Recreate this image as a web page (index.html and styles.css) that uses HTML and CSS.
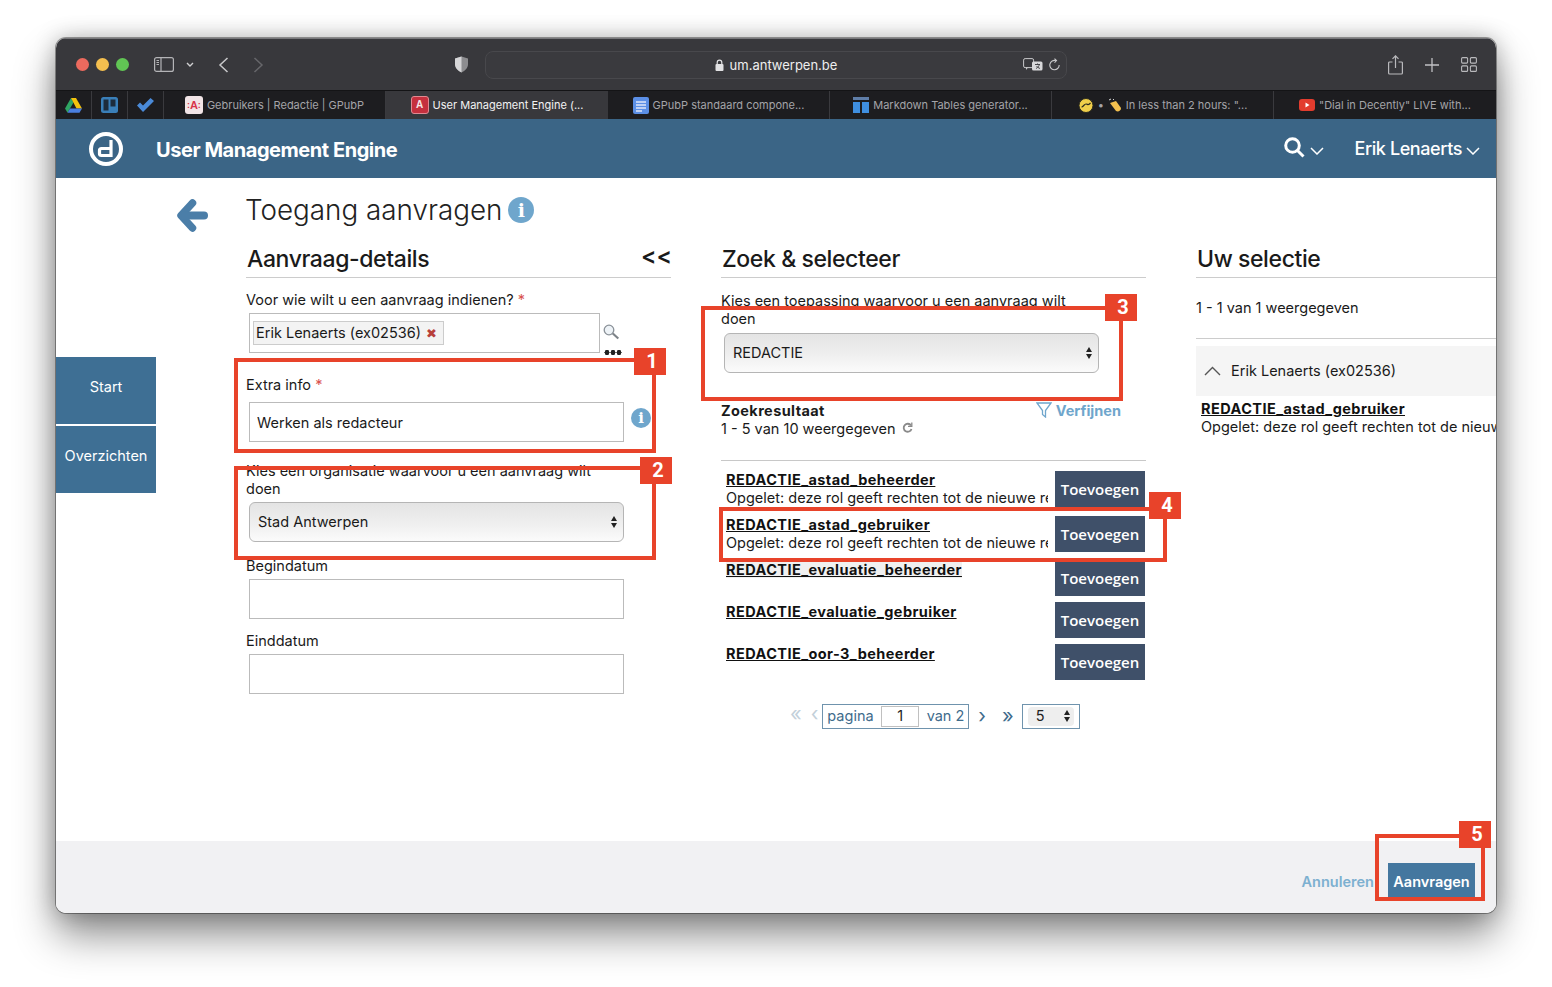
FILE: index.html
```html
<!DOCTYPE html>
<html lang="en">
<head>
    <meta charset="UTF-8">
    <meta name="viewport" content="width=device-width, initial-scale=1.0">
    <title>User Management Engine</title>
    <link rel="stylesheet" href="styles.css">
</head>
<body>
    <div class="window">
        <!-- browser chrome -->
        <div class="toolbar">
            <div class="lights">
                <span class="light red"></span>
                <span class="light yellow"></span>
                <span class="light green"></span>
            </div>
            <svg class="tb-sidebar" width="20" height="15" viewBox="0 0 20 15" fill="none" stroke="#b4b4b7" stroke-width="1.2"><rect x="0.6" y="0.6" width="18.8" height="13.8" rx="2"/><path d="M7 .6v13.8"/><path d="M2.5 3.5h2.5M2.5 5.5h2.5M2.5 7.5h2.5" stroke-width="1"/></svg>
            <svg class="tb-chevron" width="8" height="5" viewBox="0 0 8 5" fill="none" stroke="#d0d0d2" stroke-width="1.4"><path d="M1 1l3 3 3-3"/></svg>
            <svg class="tb-back" width="11" height="16" viewBox="0 0 11 16" fill="none" stroke="#c8c8ca" stroke-width="1.5"><path d="M9.5 1L2 8l7.5 7"/></svg>
            <svg class="tb-forward" width="11" height="16" viewBox="0 0 11 16" fill="none" stroke="#66666a" stroke-width="1.5"><path d="M1.5 1L9 8l-7.5 7"/></svg>
            <svg class="tb-shield" width="15" height="17" viewBox="0 0 15 17"><path d="M7.5 0.6L14 2.6V8c0 4-2.8 6.800-6.500 8.400C3.800 14.800 1 12 1 8V2.600z" fill="#8d8d90"/><path d="M7.500 .6L1 2.600V8c0 4 2.800 6.800 6.500 8.400z" fill="#d6d6d8"/></svg>
            <div class="address">
                <div class="address-center">
                    <svg width="9" height="12" viewBox="0 0 9 12"><rect x="0.500" y="5" width="8" height="7" rx="1" fill="#e2e2e4"/><path d="M2.200 5V3.400a2.300 2.300 0 0 1 4.600 0V5" fill="none" stroke="#e2e2e4" stroke-width="1.200"/></svg>
                    <span>um.antwerpen.be</span>
                </div>
                <svg class="tb-translate" width="20" height="14" viewBox="0 0 20 14"><rect x="0.600" y="0.600" width="10" height="9" rx="1.500" fill="none" stroke="#c8c8ca" stroke-width="1"/><path d="M3 12l2-2.500H3z" fill="#c8c8ca"/><rect x="9" y="3.500" width="10.500" height="9" rx="1.500" fill="#d8d8da"/><path d="M12 6.500h5M14.500 5.500v1M13 10.500c2-1 3-2.500 3.300-4M13.500 8c.8 1.200 2 2 3.500 2.500" fill="none" stroke="#38383c" stroke-width=".9"/></svg>
                <svg class="tb-reload" width="11" height="13" viewBox="0 0 11 13" fill="none" stroke="#c8c8ca" stroke-width="1.100"><path d="M7 2.600A4.700 4.700 0 1 0 10.200 7"/><path d="M5.500 .6l2 2-2 2"/></svg>
            </div>
            <svg class="tb-share" width="15" height="20" viewBox="0 0 15 20" fill="none" stroke="#b9b9bc" stroke-width="1.200"><path d="M4.500 7H1.600C1 7 .6 7.400 .6 8v10c0 .6.400 1 1 1h11.800c.6 0 1-.4 1-1V8c0-.6-.4-1-1-1h-2.900"/><path d="M7.500 13V1M4.500 3.800L7.500 .8l3 3"/></svg>
            <svg class="tb-plus" width="14" height="14" viewBox="0 0 14 14" fill="none" stroke="#c0c0c3" stroke-width="1.300"><path d="M7 0v14M0 7h14"/></svg>
            <svg class="tb-grid" width="16" height="15" viewBox="0 0 16 15" fill="none" stroke="#b9b9bc" stroke-width="1.100"><rect x="0.600" y="0.600" width="6" height="5.500" rx="1"/><rect x="9.400" y="0.600" width="6" height="5.500" rx="1"/><rect x="0.600" y="8.900" width="6" height="5.500" rx="1"/><rect x="9.400" y="8.900" width="6" height="5.500" rx="1"/></svg>
        </div>
        <div class="tabs">
            <div class="pinned">
                <svg width="17" height="15" viewBox="0 0 17 15"><path d="M6 0L0 10.500l2.500 4.200 6-10.200z" fill="#2fa563"/><path d="M11 0H6l5.500 10.500H17z" fill="#f4c20d"/><path d="M2.500 14.700h12l2.500-4.200H5z" fill="#4a7fe0"/></svg>
            </div>
            <div class="pinned">
                <svg width="17" height="16" viewBox="0 0 17 16"><rect width="17" height="16" rx="2.500" fill="#3a7fb8"/><rect x="2.500" y="2.500" width="5" height="11" fill="#1c2c3c"/><rect x="9.500" y="2.500" width="5" height="7" fill="#1c2c3c"/></svg>
            </div>
            <div class="pinned">
                <svg width="17" height="14" viewBox="0 0 17 14"><path d="M0 7.500L3 4.500l3 3L13.500 0 17 3 6 14z" fill="#4a8ad8"/></svg>
            </div>
            <div class="tab">
                <span class="fav fav-pink">A</span>
                <span>Gebruikers | Redactie | GPubP</span>
            </div>
            <div class="tab active">
                <span class="fav fav-red">A</span>
                <span>User Management Engine (...</span>
            </div>
            <div class="tab">
                <svg width="16" height="17" viewBox="0 0 16 17"><rect width="16" height="17" rx="2" fill="#5b8fe6"/><path d="M3 5h10M3 8h10M3 11h10M3 14h6" stroke="#dfe8fa" stroke-width="1.300"/></svg>
                <span>GPubP standaard compone...</span>
            </div>
            <div class="tab">
                <svg width="16" height="16" viewBox="0 0 16 16"><rect width="16" height="3" fill="#5f7ea8"/><rect y="5" width="7" height="11" fill="#3f8fe0"/><rect x="9" y="5" width="7" height="11" fill="#3f8fe0"/></svg>
                <span>Markdown Tables generator...</span>
            </div>
            <div class="tab">
                <svg width="16" height="15" viewBox="0 0 16 15"><circle cx="8" cy="7.500" r="7" fill="#f0cf4a" stroke="#2b2b20" stroke-width="1"/><path d="M3.500 9c2 0 2.500-3 4.500-3s2 2 4.500-1" fill="none" stroke="#2b2b20" stroke-width="1.200"/></svg>
                <span class="tab-dot">•</span>
                <svg width="14" height="14" viewBox="0 0 14 14"><path d="M2 5l6 8c2 1 5 0 5-3L8 3z" fill="#f3c04e"/><path d="M1 2l2-1M5 1l1 1" stroke="#d8d8d8"/></svg>
                <span>In less than 2 hours: "...</span>
            </div>
            <div class="tab">
                <svg width="16" height="12" viewBox="0 0 16 12"><rect width="16" height="12" rx="3" fill="#e23c2e"/><path d="M6.500 3.500v5l4-2.500z" fill="#fff"/></svg>
                <span>"Dial in Decently" LIVE with...</span>
            </div>
        </div>

        <!-- application -->
        <header class="appbar">
            <svg class="logo" width="36" height="36" viewBox="0 0 36 36" fill="none" stroke="#fff"><circle cx="18" cy="18" r="15" stroke-width="4"/><path d="M23 9v15.500H13.500q-2 0-2-2v-3q0-2 2-2H23" stroke-width="3.200"/></svg>
            <div class="app-title">User Management Engine</div>
            <svg class="search" width="21" height="21" viewBox="0 0 21 21" fill="none" stroke="#fff" stroke-width="3"><circle cx="8.500" cy="8.500" r="6.800"/><path d="M13.500 13.500l6 6"/></svg>
            <svg class="app-chevron" width="14" height="8" viewBox="0 0 14 8" fill="none" stroke="#fff" stroke-width="1.500"><path d="M1 1l6 6 6-6"/></svg>
            <div class="app-user">Erik Lenaerts</div>
            <svg class="app-chevron user-chevron" width="14" height="8" viewBox="0 0 14 8" fill="none" stroke="#fff" stroke-width="1.500"><path d="M1 1l6 6 6-6"/></svg>
        </header>

        <main class="main">
            <nav class="sidenav">
                <a class="nav-item">Start</a>
                <a class="nav-item">Overzichten</a>
            </nav>
            <div class="backcol">
                <svg width="31" height="33" viewBox="0 0 31 33"><path d="M15.500 4L4 16.500 15.500 29" fill="none" stroke="#4b7ea8" stroke-width="7.500" stroke-linecap="round" stroke-linejoin="round"/><path d="M6 16.500h21" stroke="#4b7ea8" stroke-width="8" stroke-linecap="round"/></svg>
            </div>
            <div class="page">
                <h1 class="page-title">Toegang aanvragen
                    <span class="info info-big">i</span>
                </h1>
                <div class="columns">
                    <section class="col">
                        <h2 class="col-head">Aanvraag-details <span class="collapse">&lt;&lt;</span></h2>

                        <div class="field field-who">
                            <label class="lbl">Voor wie wilt u een aanvraag indienen? <span class="req">*</span></label>
                            <div class="who-row">
                                <div class="box who-box"><span class="tag">Erik Lenaerts (ex02536) <span class="tag-x">&#10006;</span></span></div>
                                <div class="who-tools">
                                    <svg width="17" height="16" viewBox="0 0 17 16" fill="none"><circle cx="6" cy="6" r="4.800" stroke="#8a9198" stroke-width="1.300" fill="#eef3f7"/><path d="M9.800 9.500l5.500 5" stroke="#7d8388" stroke-width="2.200"/></svg>
                                    <span class="dots"></span>
                                </div>
                            </div>
                        </div>

                        <div class="field field-extra">
                            <label class="lbl" for="extraInfo">Extra info <span class="req">*</span></label>
                            <div class="extra-row">
                                <input class="box" id="extraInfo" type="text" value="Werken als redacteur">
                                <span class="info">i</span>
                            </div>
                        </div>

                        <div class="field field-org">
                            <label class="lbl">Kies een organisatie waarvoor u een aanvraag wilt doen</label>
                            <div class="select"><span>Stad Antwerpen</span><span class="updown"></span></div>
                        </div>

                        <div class="field field-begin">
                            <label class="lbl" for="begin">Begindatum</label>
                            <input class="box" id="begin" type="text">
                        </div>

                        <div class="field field-end">
                            <label class="lbl" for="end">Einddatum</label>
                            <input class="box" id="end" type="text">
                        </div>
                    </section>

                    <section class="col">
                        <h2 class="col-head">Zoek &amp; selecteer</h2>

                        <div class="field field-app">
                            <label class="lbl">Kies een toepassing waarvoor u een aanvraag wilt doen</label>
                            <div class="select"><span>REDACTIE</span><span class="updown"></span></div>
                        </div>

                        <div class="results-head">
                            <div>
                                <div class="bold">Zoekresultaat</div>
                                <div>1 - 5 van 10 weergegeven
                                    <svg class="refresh" width="11" height="12" viewBox="0 0 11 12" fill="none" stroke="#8a8a8a" stroke-width="1.800"><path d="M9 3.500A4 4 0 1 0 9.500 7"/><path d="M9.800 .6v3.800H6" stroke-width="1.300"/></svg>
                                </div>
                            </div>
                            <a class="refine">
                                <svg width="16" height="16" viewBox="0 0 16 16" fill="none" stroke="#6fa6cc" stroke-width="1.300"><path d="M1 1h14L9.500 8.500V15L6.500 12.500v-4z"/></svg>
                                <span>Verfijnen</span>
                            </a>
                        </div>

                        <div class="roles">
                            <div class="role role-desc">
                                <div class="role-text">
                                    <a class="role-name">REDACTIE_astad_beheerder</a>
                                    <div>Opgelet: deze rol geeft rechten tot de nieuwe re</div>
                                </div>
                                <button class="add">Toevoegen</button>
                            </div>
                            <div class="role role-desc">
                                <div class="role-text">
                                    <a class="role-name">REDACTIE_astad_gebruiker</a>
                                    <div>Opgelet: deze rol geeft rechten tot de nieuwe re</div>
                                </div>
                                <button class="add">Toevoegen</button>
                            </div>
                            <div class="role">
                                <div class="role-text">
                                    <a class="role-name hovered">REDACTIE_evaluatie_beheerder</a>
                                </div>
                                <button class="add">Toevoegen</button>
                            </div>
                            <div class="role">
                                <div class="role-text">
                                    <a class="role-name">REDACTIE_evaluatie_gebruiker</a>
                                </div>
                                <button class="add">Toevoegen</button>
                            </div>
                            <div class="role">
                                <div class="role-text">
                                    <a class="role-name">REDACTIE_oor-3_beheerder</a>
                                </div>
                                <button class="add">Toevoegen</button>
                            </div>
                        </div>

                        <div class="pager">
                            <span class="pg-arrow pg-off pg-first">&laquo;</span>
                            <span class="pg-arrow pg-off pg-prev">&lsaquo;</span>
                            <div class="pg-box">
                                <span>pagina</span>
                                <span class="pg-input">1</span>
                                <span>van 2</span>
                            </div>
                            <span class="pg-arrow pg-next">&rsaquo;</span>
                            <span class="pg-arrow pg-last">&raquo;</span>
                            <div class="pg-size"><div class="pg-select"><span>5</span><span class="updown"></span></div></div>
                        </div>
                    </section>

                    <section class="col col-selection">
                        <h2 class="col-head">Uw selectie</h2>
                        <div class="sel-count">1 - 1 van 1 weergegeven</div>
                        <div class="sel-group">
                            <svg width="17" height="10" viewBox="0 0 17 10" fill="none" stroke="#555" stroke-width="1.400"><path d="M1 9l7.500-7.500L16 9"/></svg>
                            <span>Erik Lenaerts (ex02536)</span>
                        </div>
                        <div class="sel-item">
                            <a class="role-name">REDACTIE_astad_gebruiker</a>
                            <div>Opgelet: deze rol geeft rechten tot de nieuwe</div>
                        </div>
                    </section>
                </div>
            </div>
        </main>

        <footer class="footer">
            <a class="cancel">Annuleren</a>
            <button class="submit">Aanvragen</button>
        </footer>

        <!-- numbered annotations drawn over the screenshot -->
        <div class="callout c1"><span class="badge">1</span></div>
        <div class="callout c2"><span class="badge">2</span></div>
        <div class="callout c3"><span class="badge">3</span></div>
        <div class="callout c4"><span class="badge">4</span></div>
        <div class="callout c5"><span class="badge">5</span></div>
    </div>
</body>
</html>
```
FILE: styles.css
```css
* {
    box-sizing: border-box;
}

body {
    margin: 0;
    padding: 38px 0 0 56px;
    height: 987px;
    overflow: hidden;
    background-color: #ffffff;
    font-family: Inter, "Liberation Sans", sans-serif;
    font-size: 14.5px;
    line-height: 18px;
    color: #1a1a1a;
}

.window {
    position: relative;
    width: 1440px;
    height: 875px;
    border-radius: 10px;
    overflow: hidden;
    background-color: #ffffff;
    display: flex;
    flex-direction: column;
}

body::before {
    content: "";
    position: absolute;
    left: 56px;
    top: 38px;
    width: 1440px;
    height: 875px;
    border-radius: 10px;
    box-shadow: 0 0 0 1px rgba(0, 0, 0, 0.35), 0 22px 40px rgba(0, 0, 0, 0.45), 0 0 22px rgba(0, 0, 0, 0.25);
}

/* browser chrome */
.toolbar {
    height: 52px;
    background-color: #38383c;
    border-top: 1px solid #77777a;
    display: flex;
    align-items: center;
    flex-shrink: 0;
}

.lights {
    display: flex;
    gap: 7px;
    margin-left: 20px;
}

.light {
    width: 13px;
    height: 13px;
    border-radius: 50%;
}

.red { background-color: #ec6a5e; }
.yellow { background-color: #f4bf4f; }
.green { background-color: #61c554; }

.tb-sidebar { margin-left: 25px; }
.tb-chevron { margin-left: 12px; }
.tb-back { margin-left: 24px; }
.tb-forward { margin-left: 24px; }
.tb-shield { margin-left: 190px; }

.address {
    position: relative;
    width: 582px;
    height: 28px;
    margin-left: 16px;
    border: 1px solid #48484c;
    border-radius: 8px;
    background-color: #3a3a3e;
    display: flex;
    align-items: center;
    justify-content: flex-end;
    color: #eeeeee;
    font-size: 13px;
}

.address-center {
    position: absolute;
    left: 0;
    right: 0;
    display: flex;
    align-items: center;
    justify-content: center;
    gap: 6px;
}

.tb-translate { margin-right: 6px; position: relative; }
.tb-reload { margin-right: 6px; position: relative; }
.tb-share { margin-left: 321px; }
.tb-plus { margin-left: 22px; }
.tb-grid { margin-left: 22px; }

.tabs {
    height: 29px;
    background-color: #1d1d20;
    border-top: 1px solid #141416;
    display: flex;
    flex-shrink: 0;
    font-size: 11px;
    color: #a4a4a8;
}

.pinned {
    width: 36px;
    display: flex;
    align-items: center;
    justify-content: center;
    border-right: 1px solid #3a3a3e;
}

.tab {
    width: 222px;
    display: flex;
    align-items: center;
    justify-content: center;
    gap: 4px;
    border-right: 1px solid #3a3a3e;
    white-space: nowrap;
}

.tab:last-child {
    border-right: none;
}

.tab.active {
    background-color: #38383c;
    color: #f2f2f2;
    border-right: none;
}

.tab-dot {
    color: #a4a4a8;
}

.fav {
    width: 18px;
    height: 18px;
    border-radius: 3px;
    display: flex;
    align-items: center;
    justify-content: center;
    font-family: "Liberation Sans", sans-serif;
    font-weight: bold;
    font-size: 12px;
}

.fav-pink {
    background-color: #f1e4e6;
    color: #d8344a;
    font-size: 11px;
}

.fav-pink::before,
.fav-pink::after {
    content: ":";
    font-size: 9px;
}

.fav-red {
    background-color: #c5303e;
    color: #f6e6e6;
    border: 1px solid #e08a92;
    font-size: 10px;
}

/* application bar */
.appbar {
    height: 59px;
    background-color: #3b6586;
    color: #ffffff;
    display: flex;
    align-items: center;
    flex-shrink: 0;
}

.logo { margin-left: 32px; }

.app-title {
    margin-left: 32px;
    margin-top: 2px;
    font-size: 20px;
    font-weight: 700;
    letter-spacing: -0.45px;
}

.search {
    margin-left: auto;
    margin-top: -3px;
}

.app-chevron {
    margin-left: 5px;
    margin-top: 5px;
}

.app-user {
    margin-left: 30px;
    font-size: 18px;
    font-weight: 500;
    letter-spacing: -0.4px;
}

.user-chevron {
    margin-left: 4px;
    margin-right: 16px;
}

/* page */
.main {
    height: 663px;
    display: flex;
    flex-shrink: 0;
}

.sidenav {
    width: 100px;
    padding-top: 179px;
    flex-shrink: 0;
}

.nav-item {
    height: 67px;
    margin-bottom: 2px;
    padding-bottom: 8px;
    background-color: #3e6f94;
    color: #ffffff;
    display: flex;
    align-items: center;
    justify-content: center;
}

.backcol {
    width: 90px;
    padding: 21px 0 0 21px;
    flex-shrink: 0;
}

.page {
    flex: 1;
    min-width: 0;
}

.page-title {
    margin: 12px 0 0 -1px;
    height: 40px;
    display: flex;
    align-items: center;
    gap: 6px;
    font-size: 27.8px;
    font-weight: 300;
    line-height: 40px;
    color: #222222;
}

.info {
    width: 20px;
    height: 20px;
    border-radius: 50%;
    background-color: #6fa6cc;
    color: #ffffff;
    display: flex;
    align-items: center;
    justify-content: center;
    font-family: "DejaVu Serif", serif;
    font-weight: bold;
    font-size: 15px;
}

.info-big {
    width: 26px;
    height: 26px;
    font-size: 19px;
}

.columns {
    display: flex;
    gap: 50px;
    margin-top: 14px;
}

.col {
    width: 425px;
    flex-shrink: 0;
}

.col-selection {
    width: 300px;
    overflow: hidden;
}

.col-head {
    position: relative;
    height: 34px;
    margin: 0;
    padding-left: 1px;
    border-bottom: 1px solid #cccccc;
    font-size: 23px;
    font-weight: 500;
    line-height: 30px;
    letter-spacing: -0.4px;
}

.collapse {
    position: absolute;
    right: -1px;
    top: -3px;
    font-weight: 600;
    letter-spacing: 0;
}

.lbl {
    display: block;
}

.req {
    color: #d9534f;
}

.box {
    display: block;
    width: 375px;
    height: 40px;
    margin-left: 3px;
    padding: 0 7px;
    border: 1px solid #bbbbbb;
    background-color: #ffffff;
    font: inherit;
    color: inherit;
}

.select {
    width: 375px;
    height: 40px;
    margin: 4px 0 0 3px;
    padding: 0 6px 0 8px;
    border: 1px solid #b5b5b5;
    border-radius: 6px;
    background: linear-gradient(#e4e4e4, #efefef 55%, #fbfbfb);
    display: flex;
    align-items: center;
    justify-content: space-between;
}

.updown {
    display: flex;
    flex-direction: column;
    gap: 2px;
}

.updown::before,
.updown::after {
    content: "";
    border-left: 3.500px solid transparent;
    border-right: 3.500px solid transparent;
}

.updown::before {
    border-bottom: 5px solid #222222;
}

.updown::after {
    border-top: 5px solid #222222;
}

.field-who { margin-top: 13px; }
.field-extra { margin-top: 21px; }
.field-org { margin-top: 20px; width: 350px; }
.field-begin { margin-top: 15px; }
.field-end { margin-top: 13px; }
.field-app { margin-top: 14px; width: 350px; }

.field-app .select {
    margin-top: 5px;
}

.field-begin .box,
.field-end .box {
    margin-top: 4px;
}

.who-row {
    display: flex;
    margin-top: 4px;
}

.who-box {
    width: 351px;
    padding: 7px 3px 0;
}

.tag {
    display: inline-block;
    height: 24px;
    padding: 0 6px 0 2px;
    border: 1px solid #cccccc;
    background-color: #f3f3f3;
    line-height: 21px;
}

.tag-x {
    margin-left: 1px;
    color: #b8403a;
    font-size: 13px;
    font-family: "DejaVu Sans", sans-serif;
}

.who-tools {
    padding: 11px 0 0 3px;
    display: flex;
    flex-direction: column;
    gap: 10px;
}

.dots {
    width: 18px;
    height: 5px;
    margin-left: 1px;
    background: radial-gradient(circle at center, #222 2.400px, transparent 2.700px) 0 0 / 6px 5px repeat-x;
}

.extra-row {
    display: flex;
    align-items: center;
    gap: 7px;
    margin-top: 8px;
}

.extra-row .info {
    margin-top: -8px;
}

.bold {
    font-weight: 700;
    letter-spacing: 0.4px;
}

.results-head {
    margin-top: 29px;
    padding-right: 25px;
    display: flex;
    justify-content: space-between;
}

.refresh {
    margin-left: 2px;
}

.refine {
    color: #6fa6cc;
    font-weight: 700;
    display: flex;
    gap: 4px;
}

.roles {
    margin-top: 22px;
    padding: 9px 1px 0 5px;
    border-top: 1px solid #c8c8c8;
}

.role {
    height: 42px;
    display: flex;
    justify-content: space-between;
}

.role-desc {
    height: 45px;
}

.role-desc .add {
    margin-top: 1px;
}

.role-text {
    width: 322px;
    margin-top: 1px;
    overflow: hidden;
    white-space: nowrap;
}

.role-name {
    font-weight: 700;
    color: #111111;
    text-decoration: underline;
    letter-spacing: 0.43px;
}

.role-name.hovered {
    background-color: #f0f0f0;
}

.add {
    width: 90px;
    height: 36px;
    padding: 0;
    border: none;
    background-color: #3f5069;
    color: #ffffff;
    font-family: "Open Sans", sans-serif;
    font-size: 15px;
    font-weight: 600;
}

.pager {
    margin-top: 18px;
    padding-left: 69px;
    height: 24px;
    display: flex;
    align-items: center;
    color: #3f6c8c;
}

.pg-arrow {
    font-size: 20px;
    line-height: 18px;
}

.pg-off {
    color: #c3d0da;
}

.pg-first { margin-bottom: 4px; }
.pg-prev { margin: 0 0 4px 9px; }
.pg-next { margin-left: 9px; }
.pg-last { margin-left: 16px; }

.pg-box {
    width: 147px;
    height: 25px;
    margin-left: 4px;
    padding: 0 4px;
    border: 1px solid #6f93ad;
    display: flex;
    align-items: center;
    justify-content: space-between;
}

.pg-input {
    width: 38px;
    height: 21px;
    border: 1px solid #c0c0c0;
    color: #222222;
    text-align: center;
}

.pg-size {
    width: 58px;
    height: 25px;
    margin-left: 8px;
    padding: 2px 5px;
    border: 1px solid #6f93ad;
}

.pg-select {
    height: 19px;
    padding: 0 4px 0 8px;
    border-radius: 4px;
    background-color: #eeeeee;
    color: #222222;
    display: flex;
    align-items: center;
    justify-content: space-between;
}

.sel-count {
    margin-top: 21px;
    height: 40px;
    border-bottom: 1px solid #cccccc;
}

.sel-group {
    height: 50px;
    margin-top: 7px;
    padding-left: 8px;
    background-color: #f5f5f5;
    display: flex;
    align-items: center;
    gap: 10px;
    white-space: nowrap;
}

.sel-item {
    margin-top: 4px;
    padding-left: 5px;
    white-space: nowrap;
}

/* footer */
.footer {
    height: 72px;
    background-color: #f1f1f3;
    display: flex;
    align-items: flex-start;
    justify-content: flex-end;
    padding: 22px 21px 0 0;
    flex-shrink: 0;
    gap: 14px;
}

.cancel {
    margin-top: 10px;
    color: #7db0d0;
    font-weight: 600;
}

.submit {
    width: 87px;
    height: 37px;
    padding: 0;
    border: none;
    background-color: #44779f;
    color: #ffffff;
    font: inherit;
    font-weight: 600;
}

/* annotations */
.callout {
    position: absolute;
    border: 4px solid #e8432a;
}

.badge {
    position: absolute;
    width: 32px;
    height: 27px;
    padding-left: 4px;
    background-color: #e8432a;
    color: #ffffff;
    font-family: Roboto, sans-serif;
    font-weight: 700;
    font-size: 20px;
    line-height: 27px;
    text-align: center;
}

.c1 { left: 178px; top: 320px; width: 422px; height: 95px; }
.c1 .badge { right: -14px; top: -14px; }
.c2 { left: 178px; top: 428px; width: 422px; height: 94px; }
.c2 .badge { right: -20px; top: -13px; }
.c3 { left: 645px; top: 268px; width: 422px; height: 95px; }
.c3 .badge { right: -18px; top: -16px; }
.c4 { left: 663px; top: 469px; width: 448px; height: 55px; }
.c4 .badge { right: -18px; top: -19px; }
.c5 { left: 1319px; top: 796px; width: 110px; height: 67px; }
.c5 .badge { right: -10px; top: -17px; }
```
